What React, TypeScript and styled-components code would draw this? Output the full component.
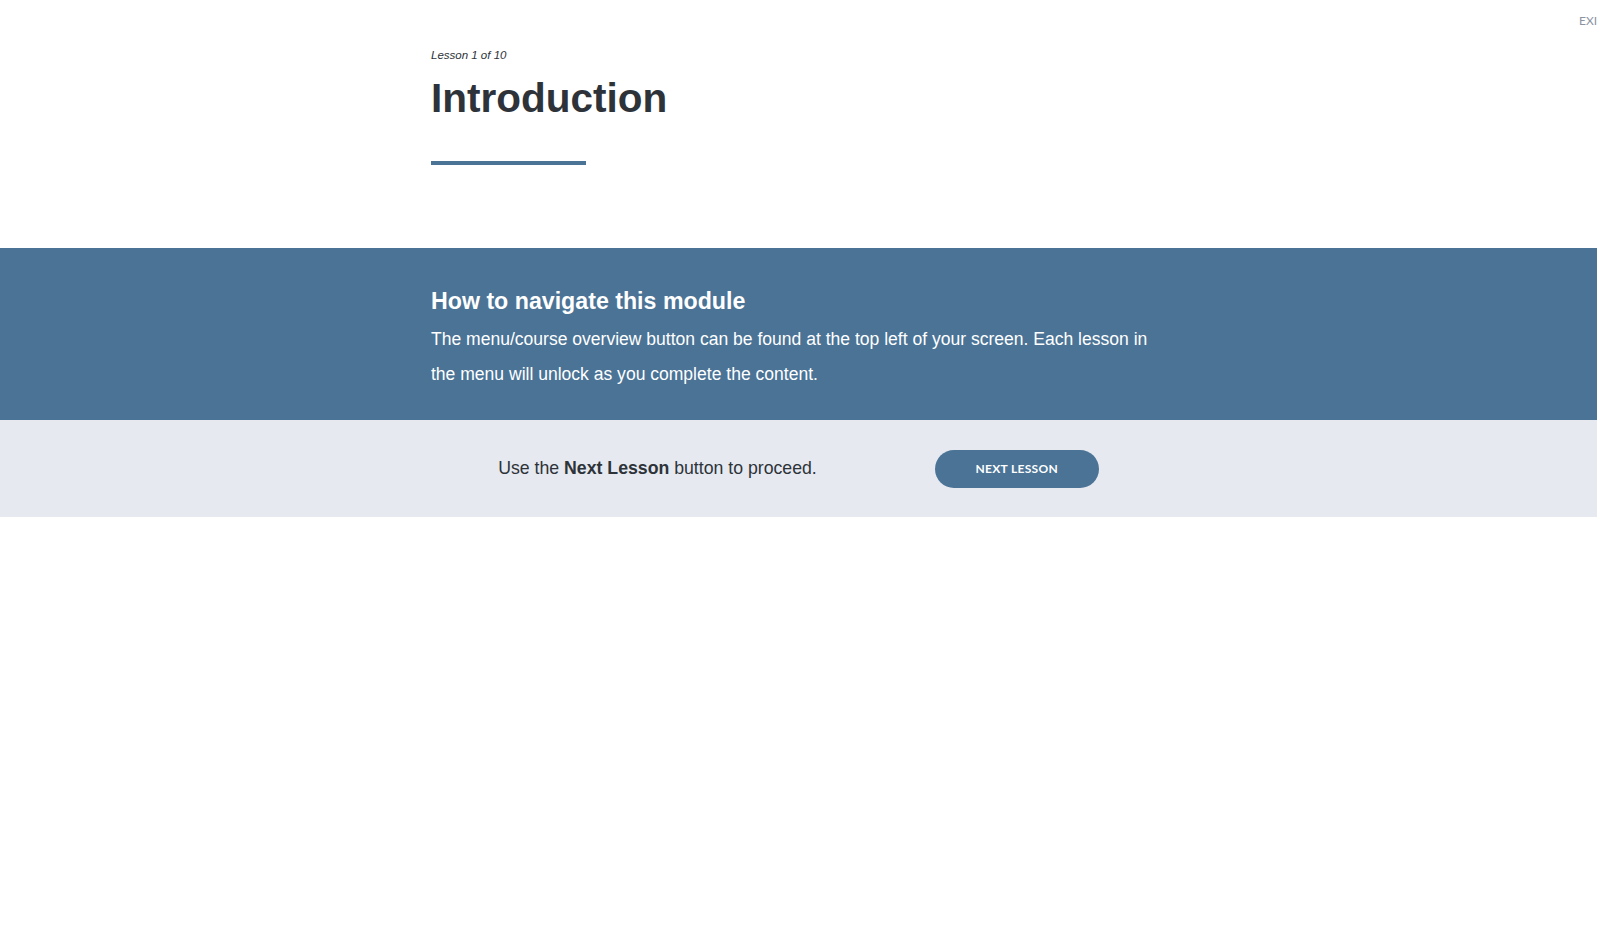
import React from 'react';
import styled, {createGlobalStyle} from 'styled-components';

const GlobalStyle = createGlobalStyle`
    html, body {
        margin: 0;
        padding: 0;
        background: #fff;
    }

    body {
        font-family: "Liberation Sans", Arial, sans-serif;
        color: #2d3339;
    }
`

const Page = styled.div`
    position: relative;
    width: 100%;
    min-height: 952px;
    overflow: hidden;
`

// exit link sits in the top right corner, partly off screen like the original
const ExitButton = styled.button`
    position: absolute;
    top: 13px;
    left: 1579px;
    padding: 0;
    border: none;
    background: none;
    font-family: "Lato", sans-serif;
    font-size: 12px;
    font-weight: 400;
    color: #8b93a3;
    white-space: nowrap;
    cursor: pointer;
`

const Column = styled.div`
    width: 735px;
    margin: 0 auto;
`

const Header = styled.header`
    height: 248px;
    box-sizing: border-box;
    padding-top: 48px;
`

const LessonLabel = styled.div`
    font-size: 11.5px;
    font-style: italic;
    line-height: 14px;
    color: #2d3339;
`

const Title = styled.h1`
    margin: 12px 0 0;
    font-size: 40.5px;
    line-height: 48px;
    font-weight: 700;
    color: #2d3339;
`

const TitleBar = styled.div`
    width: 155px;
    height: 4px;
    margin-top: 39px;
    background: #4a7396;
`

const Banner = styled.section`
    height: 172px;
    box-sizing: border-box;
    padding-top: 39px;
    background: #4a7396;
    color: #fff;
`

const BannerTitle = styled.h2`
    margin: 0;
    font-size: 23.2px;
    line-height: 28px;
    font-weight: 700;
`

const BannerText = styled.p`
    margin: 7px 0 0;
    font-size: 17.55px;
    line-height: 34.5px;
`

const NextBar = styled.div`
    height: 97px;
    display: flex;
    align-items: center;
    justify-content: center;
    gap: 118px;
    background: #e6e9f0;
`

const NextText = styled.span`
    font-size: 17.7px;
    color: #2d3339;

    b {
        font-weight: 700;
    }
`

const NextButton = styled.button`
    width: 164px;
    height: 38px;
    border: none;
    border-radius: 19px;
    background: #4a7396;
    color: #fff;
    font-family: "Lato", sans-serif;
    font-size: 12px;
    font-weight: 700;
    letter-spacing: 0.3px;
    cursor: pointer;
`

function App() {
    return (
        <Page>
            <GlobalStyle/>
            <ExitButton>EXIT</ExitButton>
            <Header>
                <Column>
                    <LessonLabel>Lesson 1 of 10</LessonLabel>
                    <Title>Introduction</Title>
                    <TitleBar/>
                </Column>
            </Header>
            <Banner>
                <Column>
                    <BannerTitle>How to navigate this module</BannerTitle>
                    <BannerText>
                        The menu/course overview button can be found at the top left of your screen. Each lesson in
                        the menu will unlock as you complete the content.
                    </BannerText>
                </Column>
            </Banner>
            <NextBar>
                <NextText>Use the <b>Next Lesson</b> button to proceed.</NextText>
                <NextButton>NEXT LESSON</NextButton>
            </NextBar>
        </Page>
    );
}

export default App;
